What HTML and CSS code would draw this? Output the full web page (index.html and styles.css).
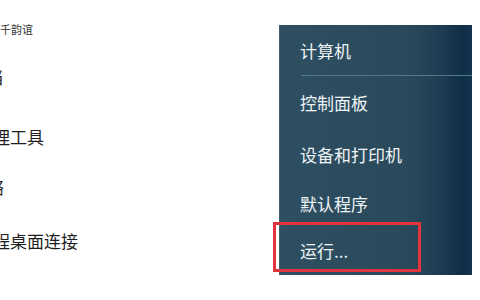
FILE: index.html
```html
<!DOCTYPE html>
<html lang="zh-CN">
<head>
  <meta charset="UTF-8" />
  <title>开始菜单</title>
  <link rel="stylesheet" href="styles.css">
</head>
<body>

<div class="start-menu">
  <!-- left list, clipped at the window edge -->
  <ul class="programs">
    <li class="prog prog-small">千韵谊</li>
    <li class="prog prog-docs">文档</li>
    <li class="prog prog-tools">管理工具</li>
    <li class="prog prog-net">网络</li>
    <li class="prog prog-remote">远程桌面连接</li>
  </ul>

  <!-- right blue panel -->
  <div class="places">
    <a href="#" class="place place-computer">计算机</a>
    <div class="sep"></div>
    <a href="#" class="place place-panel">控制面板</a>
    <a href="#" class="place place-devices">设备和打印机</a>
    <a href="#" class="place place-default">默认程序</a>
    <a href="#" class="place place-run">运行...</a>
    <div class="highlight"></div>
  </div>
</div>

</body>
</html>
```

FILE: styles.css
```css
* {
  margin: 0;
  padding: 0;
  box-sizing: border-box;
}
body {
  font-family: "Noto Sans CJK SC", "Noto Sans", sans-serif;
  background: #fff;
  width: 480px;
  height: 300px;
  overflow: hidden;
}
a {
  color: inherit;
  text-decoration: none;
}
.start-menu {
  display: flex;
  height: 300px;
}
.programs {
  list-style: none;
  width: 279px;
  overflow: hidden;
  color: #1e1e1e;
  font-size: 17px;
  white-space: nowrap;
}
.prog {
  line-height: 24px;
  height: 24px;
}
.prog-small {
  margin-top: 17px;
  font-size: 11px;
  color: #333;
}
.prog-docs {
  margin-top: 24px;
  margin-left: -31px;
}
.prog-tools {
  margin-top: 36px;
  margin-left: -24px;
}
.prog-net {
  margin-top: 26px;
  margin-left: -30px;
}
.prog-remote {
  margin-top: 30px;
  margin-left: -24px;
}
.places {
  position: relative;
  width: 193px;
  height: 250px;
  margin-top: 25px;
  background: linear-gradient(to right, #2e4f61 0%, #2a4a5c 65%, #1d3c52 85%, #0e2e47 95%, #14344f 100%);
  border-left: 1px solid #3e5e6e;
  color: #eef3f6;
  font-size: 17px;
  display: flex;
  flex-direction: column;
}
.place {
  display: flex;
  align-items: center;
  padding-left: 20px;
}
.place-computer { height: 50px; }
.place-panel { height: 53px; }
.place-devices { height: 51px; }
.place-default { height: 46px; }
.place-run { height: 49px; }
.sep {
  height: 1px;
  margin-left: 21px;
  background: #52788a;
}
.highlight {
  position: absolute;
  left: -7px;
  top: 197px;
  width: 148px;
  height: 50px;
  border: 3px solid #e2343c;
}
```
